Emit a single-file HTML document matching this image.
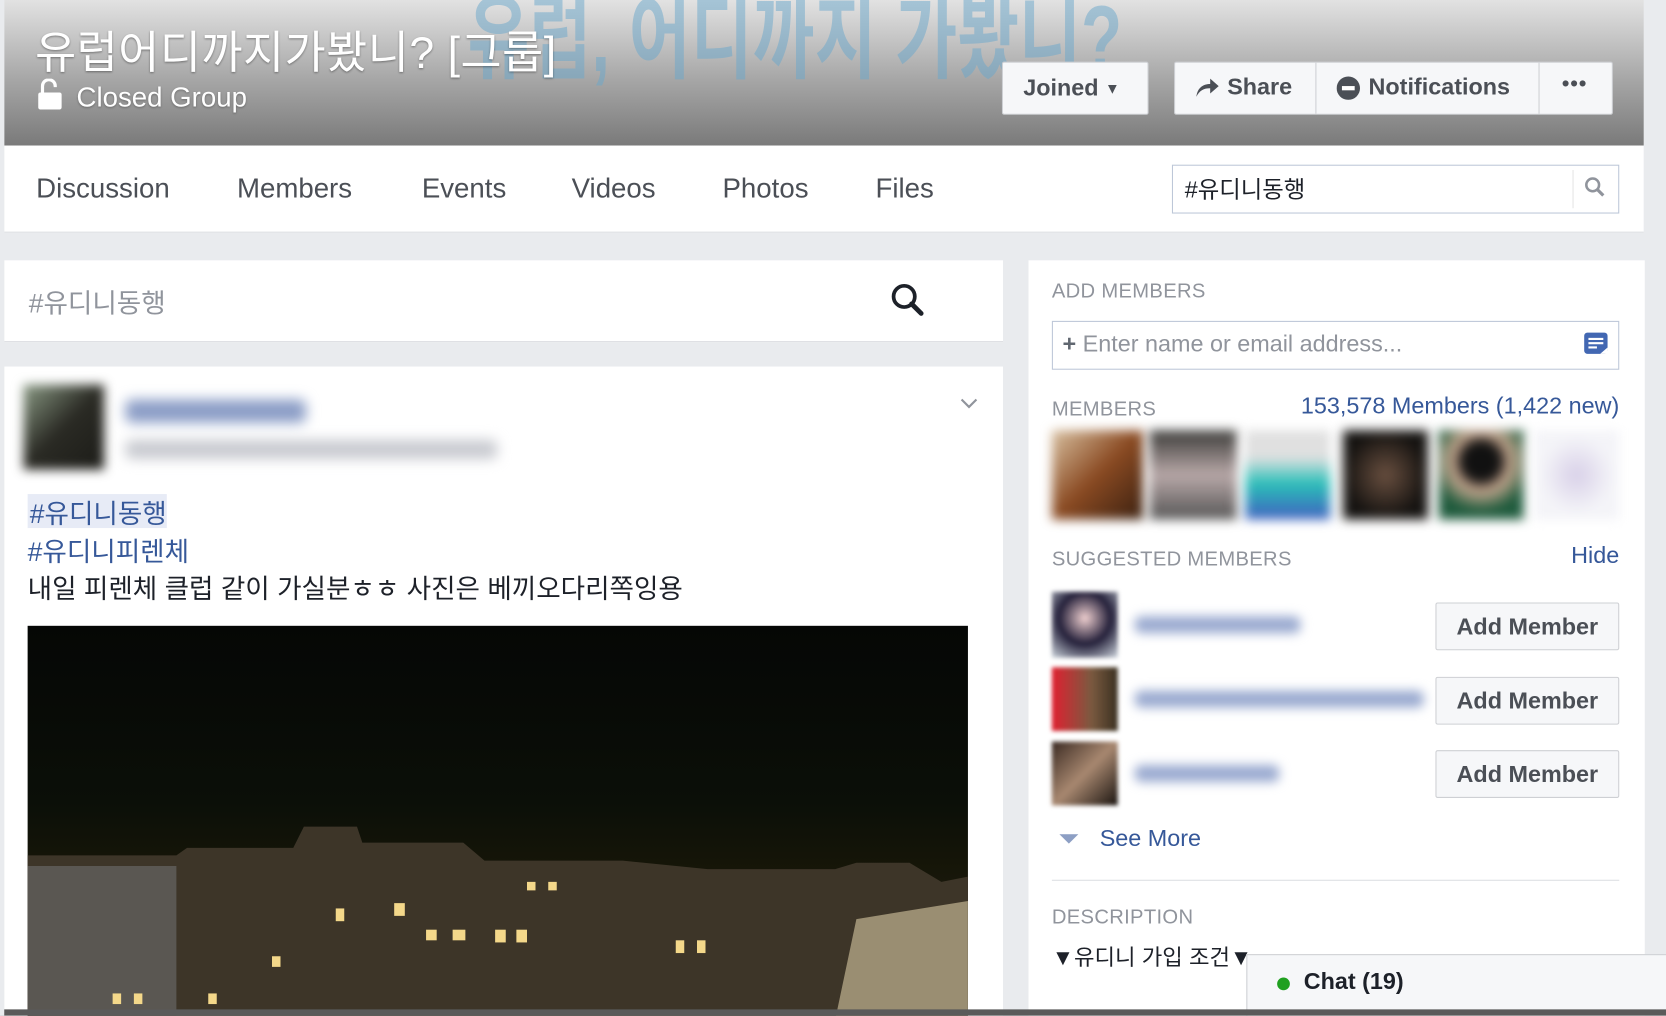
<!DOCTYPE html>
<html><head><meta charset="utf-8"><style>
html,body{margin:0;padding:0;width:1666px;height:1016px;overflow:hidden;background:#e9ebee}
#w{position:absolute;left:0;top:0;width:1568px;height:956px;transform:scale(1.0625);transform-origin:0 0;font-family:"Liberation Sans","Noto Sans CJK KR",sans-serif;background:#e9ebee;overflow:hidden}
.a{position:absolute;white-space:nowrap}
.btn{position:absolute;background:#f6f7f9;border:1px solid #ced0d4;border-radius:2px;color:#4b4f56;font-weight:bold;font-size:22px;box-sizing:border-box}
.tab{position:absolute;top:162px;font-size:26px;color:#4b4f56}
.lbl{position:absolute;font-size:19px;color:#90949c;letter-spacing:.3px}
.am{left:1351px;width:173px;height:45px;line-height:43px;text-align:center;font-size:22px}
.bl{filter:blur(5px)}
</style></head><body><div id="w">
<!-- cover -->
<div class="a" style="left:4px;top:0;width:1543px;height:137px;background:linear-gradient(#e2e2e2,#a6a6a6 55%,#7a7a7a)"></div>
<div class="a" style="left:440px;top:-34px;font-size:88px;font-weight:bold;color:#6aa8cc;opacity:.5;transform:scaleX(.72);transform-origin:0 0;font-family:'Liberation Sans','Noto Sans CJK KR',sans-serif">유럽, 어디까지 가봤니?</div>
<div class="a" style="left:33px;top:16px;font-size:42px;color:#fff;letter-spacing:.5px;text-shadow:0 1px 2px rgba(0,0,0,.4)">유럽어디까지가봤니? [그룹]</div>
<svg class="a" style="left:35px;top:74px" width="24" height="30" viewBox="0 0 24 30"><path d="M5 13V7a6 6 0 0 1 12 0v1" fill="none" stroke="#fff" stroke-width="3"/><rect x="1" y="13" width="22" height="16" rx="2" fill="#fff"/></svg>
<div class="a" style="left:72px;top:76px;font-size:26px;color:#fff;text-shadow:0 1px 2px rgba(0,0,0,.3)">Closed Group</div>
<div class="btn" style="left:943px;top:58px;width:138px;height:50px;line-height:48px;padding-left:19px">Joined <span style="font-size:14px;vertical-align:2px">▼</span></div>
<div class="btn" style="left:1105px;top:58px;width:413px;height:50px"></div>
<div class="a" style="left:1238px;top:59px;width:1px;height:48px;background:#ced0d4"></div>
<div class="a" style="left:1448px;top:59px;width:1px;height:48px;background:#ced0d4"></div>
<svg class="a" style="left:1124px;top:71px" width="24" height="22" viewBox="0 0 24 22"><path d="M2 20C3 11 9 8 15 8V3l8 7-8 7v-5c-6 0-10 2-13 8z" fill="#4b4f56"/></svg>
<div class="a" style="left:1155px;top:69px;font-size:22px;font-weight:bold;color:#4b4f56">Share</div>
<svg class="a" style="left:1258px;top:72px" width="22" height="22"><circle cx="11" cy="11" r="11" fill="#4b4f56"/><rect x="5" y="9" width="12" height="4" fill="#fff"/></svg>
<div class="a" style="left:1288px;top:69px;font-size:22px;font-weight:bold;color:#4b4f56">Notifications</div>
<div class="a" style="left:1470px;top:68px;font-size:20px;font-weight:bold;color:#4b4f56;letter-spacing:1px">•••</div>
<!-- nav -->
<div class="a" style="left:4px;top:137px;width:1543px;height:81px;background:#fff;border-bottom:1px solid #dddfe2"></div>
<div class="tab" style="left:34px">Discussion</div>
<div class="tab" style="left:223px">Members</div>
<div class="tab" style="left:397px">Events</div>
<div class="tab" style="left:538px">Videos</div>
<div class="tab" style="left:680px">Photos</div>
<div class="tab" style="left:824px">Files</div>
<div class="a" style="left:1103px;top:155px;width:421px;height:46px;border:1px solid #bdc7d8;box-sizing:border-box;background:#fff"></div>
<div class="a" style="left:1480px;top:160px;width:1px;height:36px;background:#e5e5e5"></div>
<div class="a" style="left:1115px;top:161px;font-size:22px;color:#1d2129">#유디니동행</div>
<svg class="a" style="left:1491px;top:166px" width="20" height="20"><circle cx="8" cy="8" r="6" fill="none" stroke="#90949c" stroke-width="2.4"/><path d="M12 12l6 6" stroke="#90949c" stroke-width="3"/></svg>
<!-- left search -->
<div class="a" style="left:4px;top:245px;width:940px;height:76px;background:#fff;border-bottom:1px solid #dddfe2"></div>
<div class="a" style="left:27px;top:266px;font-size:25px;color:#90949c">#유디니동행</div>
<svg class="a" style="left:838px;top:266px" width="32" height="32"><circle cx="13" cy="13" r="10" fill="none" stroke="#1d2129" stroke-width="3.5"/><path d="M20 20l9 9" stroke="#1d2129" stroke-width="4.5" stroke-linecap="round"/></svg>
<!-- post -->
<div class="a" style="left:4px;top:345px;width:940px;height:620px;background:#fff"></div>
<div class="a bl" style="left:22px;top:362px;width:76px;height:80px;background:linear-gradient(135deg,#8a9a84,#2a2a24 50%,#1c1c18)"></div>
<div class="a bl" style="left:118px;top:376px;width:170px;height:22px;background:#8b9dc6;border-radius:6px;filter:blur(6px)"></div>
<div class="a bl" style="left:118px;top:414px;width:350px;height:18px;background:#c8cad0;border-radius:6px;filter:blur(6px)"></div>
<svg class="a" style="left:903px;top:374px" width="18" height="12"><path d="M2 2l7 7 7-7" fill="none" stroke="#90949c" stroke-width="2"/></svg>
<div class="a" style="left:26px;top:465px;width:131px;height:32px;background:#e7ebf6"></div>
<div class="a" style="left:28px;top:464px;font-size:25px;color:#365899">#유디니동행</div>
<div class="a" style="left:26px;top:500px;font-size:25px;color:#365899">#유디니피렌체</div>
<div class="a" style="left:26px;top:535px;font-size:25px;color:#1d2129">내일 피렌체 클럽 같이 가실분ㅎㅎ 사진은 베끼오다리쪽잉용</div>
<div class="a" style="left:26px;top:589px;width:885px;height:370px;background:linear-gradient(#050705,#0b0f08 45%,#151508 60%,#2a2518)"></div>
<svg class="a" style="left:26px;top:760px" width="885" height="200" viewBox="0 0 885 200">
<path d="M0 45 L140 45 L150 38 L250 38 L260 18 L310 18 L315 33 L410 33 L430 50 L560 50 L640 58 L760 58 L780 52 L830 52 L860 70 L885 65 L885 200 L0 200Z" fill="#3d3528"/>
<path d="M0 55 L140 55 L140 200 L0 200Z" fill="#5a5752"/>
<path d="M780 105 L885 88 L885 200 L760 200Z" fill="#9a8e72"/>
<g fill="#f4d88a"><rect x="290" y="95" width="8" height="12"/><rect x="345" y="90" width="10" height="12"/><rect x="375" y="115" width="10" height="10"/><rect x="400" y="115" width="12" height="10"/><rect x="440" y="115" width="10" height="12"/><rect x="460" y="115" width="10" height="12"/><rect x="610" y="125" width="8" height="12"/><rect x="630" y="125" width="8" height="12"/><rect x="230" y="140" width="8" height="10"/><rect x="80" y="175" width="8" height="10"/><rect x="100" y="175" width="8" height="10"/><rect x="170" y="175" width="8" height="10"/><rect x="470" y="70" width="8" height="8"/><rect x="490" y="70" width="8" height="8"/></g>
</svg>
<!-- right -->
<div class="a" style="left:968px;top:245px;width:580px;height:720px;background:#fff"></div>
<div class="lbl" style="left:990px;top:264px">ADD MEMBERS</div>
<div class="a" style="left:990px;top:302px;width:534px;height:46px;border:1px solid #bdc7d8;box-sizing:border-box"></div>
<div class="a" style="left:1000px;top:311px;font-size:22px;color:#90949c"><b style="color:#606770">+</b> Enter name or email address...</div>
<svg class="a" style="left:1490px;top:312px" width="24" height="24"><rect x="1" y="1" width="22" height="20" rx="3" fill="#4267b2"/><rect x="5" y="6" width="14" height="2" fill="#fff"/><rect x="5" y="10" width="14" height="2" fill="#fff"/><rect x="5" y="14" width="8" height="2" fill="#fff"/><path d="M16 21l7-6v6z" fill="#fff"/></svg>
<div class="lbl" style="left:990px;top:375px">MEMBERS</div>
<div class="a" style="right:44px;top:369px;font-size:22px;color:#365899">153,578 Members (1,422 new)</div>
<div class="a bl" style="left:990px;top:405px;width:86px;height:84px;background:linear-gradient(135deg,#d8c0a0,#8a4a22 50%,#3a2010)"></div>
<div class="a bl" style="left:1082px;top:405px;width:82px;height:84px;background:linear-gradient(#3b3b38,#b8a8a8 50%,#555)"></div>
<div class="a bl" style="left:1172px;top:405px;width:80px;height:84px;background:linear-gradient(#e0e0e0 30%,#2abfb8 60%,#4060c0)"></div>
<div class="a bl" style="left:1264px;top:405px;width:80px;height:84px;background:radial-gradient(#6a5040,#141210 70%)"></div>
<div class="a bl" style="left:1354px;top:405px;width:80px;height:84px;background:radial-gradient(circle at 50% 35%,#111 25%,#c9a890 40%,#1e5a3c 70%)"></div>
<div class="a bl" style="left:1444px;top:405px;width:80px;height:84px;background:radial-gradient(#d8d0e8,#f4f4f8 60%)"></div>
<div class="lbl" style="left:990px;top:516px">SUGGESTED MEMBERS</div>
<div class="a" style="right:44px;top:510px;font-size:22px;color:#365899">Hide</div>
<div class="a bl" style="left:990px;top:557px;width:62px;height:62px;background:radial-gradient(circle at 50% 40%,#f0d0d0,#24203a 50%,#d0d8e0);filter:blur(2px)"></div>
<div class="a bl" style="left:990px;top:628px;width:62px;height:60px;background:linear-gradient(90deg,#e02030,#7a5a40 60%,#3a3020);filter:blur(2px)"></div>
<div class="a bl" style="left:990px;top:698px;width:62px;height:60px;background:linear-gradient(135deg,#3a2a22,#a88870 50%,#1a1410);filter:blur(2px)"></div>
<div class="a bl" style="left:1068px;top:580px;width:156px;height:16px;background:#9aaad0;border-radius:6px"></div>
<div class="a bl" style="left:1068px;top:650px;width:272px;height:16px;background:#9aaad0;border-radius:6px"></div>
<div class="a bl" style="left:1068px;top:720px;width:136px;height:16px;background:#9aaad0;border-radius:6px"></div>
<div class="btn am" style="top:567px">Add Member</div>
<div class="btn am" style="top:637px">Add Member</div>
<div class="btn am" style="top:706px">Add Member</div>
<svg class="a" style="left:997px;top:785px" width="18" height="10"><path d="M0 0h18L9 9z" fill="#8d9fc4"/></svg>
<div class="a" style="left:1035px;top:776px;font-size:22px;color:#365899">See More</div>
<div class="a" style="left:990px;top:828px;width:534px;height:1px;background:#dddfe2"></div>
<div class="lbl" style="left:990px;top:853px">DESCRIPTION</div>
<div class="a" style="left:990px;top:885px;font-size:21px;color:#1d2129">▼유디니 가입 조건▼</div>
<div class="a" style="left:1173px;top:898px;width:400px;height:60px;background:#f6f7f9;border:1px solid #ced0d4;box-sizing:border-box"></div>
<div class="a" style="left:1202px;top:920px;width:12px;height:12px;border-radius:50%;background:#20a020"></div>
<div class="a" style="left:1227px;top:911px;font-size:22px;font-weight:bold;color:#1d2129">Chat (19)</div>
<div class="a" style="left:0;top:950px;width:1568px;height:6px;background:#5a5a5a"></div>
<div class="a" style="left:0;top:0;width:4px;height:956px;background:#e9ebee"></div>
</div></body></html>
